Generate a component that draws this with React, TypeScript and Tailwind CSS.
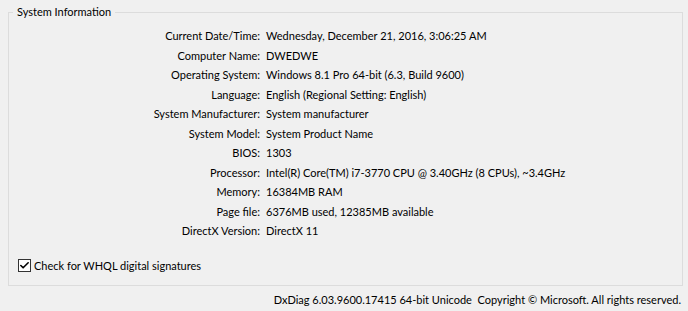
import { Check } from 'lucide-react';

const rows: [string, string][] = [
  ['Current Date/Time:', 'Wednesday, December 21, 2016, 3:06:25 AM'],
  ['Computer Name:', 'DWEDWE'],
  ['Operating System:', 'Windows 8.1 Pro 64-bit (6.3, Build 9600)'],
  ['Language:', 'English (Regional Setting: English)'],
  ['System Manufacturer:', 'System manufacturer'],
  ['System Model:', 'System Product Name'],
  ['BIOS:', '1303'],
  ['Processor:', 'Intel(R) Core(TM) i7-3770 CPU @ 3.40GHz (8 CPUs), ~3.4GHz'],
  ['Memory:', '16384MB RAM'],
  ['Page file:', '6376MB used, 12385MB available'],
  ['DirectX Version:', 'DirectX 11'],
];

export default function App() {
  return (
    <div className="w-[688px] h-[311px] bg-[#f0f0f0] text-[11px] text-black pt-[12px] pl-[8px] font-['Lato',sans-serif]">
      <div className="relative w-[675px] h-[274px] border border-[#dcdcdc] pt-[13px]">
        <span className="absolute -top-[9px] left-[4px] px-[4px] bg-[#f0f0f0] leading-[16px]">System Information</span>
        <div className="grid grid-cols-[251px_1fr] gap-x-[6px]">
          {rows.map(([label, value]) => (
            <div key={label} className="contents">
              <div className="text-right leading-[19.5px] whitespace-nowrap">{label}</div>
              <div className="leading-[19.5px] whitespace-nowrap">{value}</div>
            </div>
          ))}
        </div>
        <div className="flex items-center gap-[3px] mt-[17px] ml-[9px]">
          <span className="w-[13px] h-[13px] border border-[#333] bg-white flex items-center justify-center">
            <Check size={11} strokeWidth={3.5} />
          </span>
          <span className="leading-[16px]">Check for WHQL digital signatures</span>
        </div>
      </div>
      <div className="w-[673px] text-right mt-[6px] leading-[16px] whitespace-nowrap">
        DxDiag 6.03.9600.17415 64-bit Unicode&nbsp;&nbsp;Copyright © Microsoft. All rights reserved.
      </div>
    </div>
  );
}
